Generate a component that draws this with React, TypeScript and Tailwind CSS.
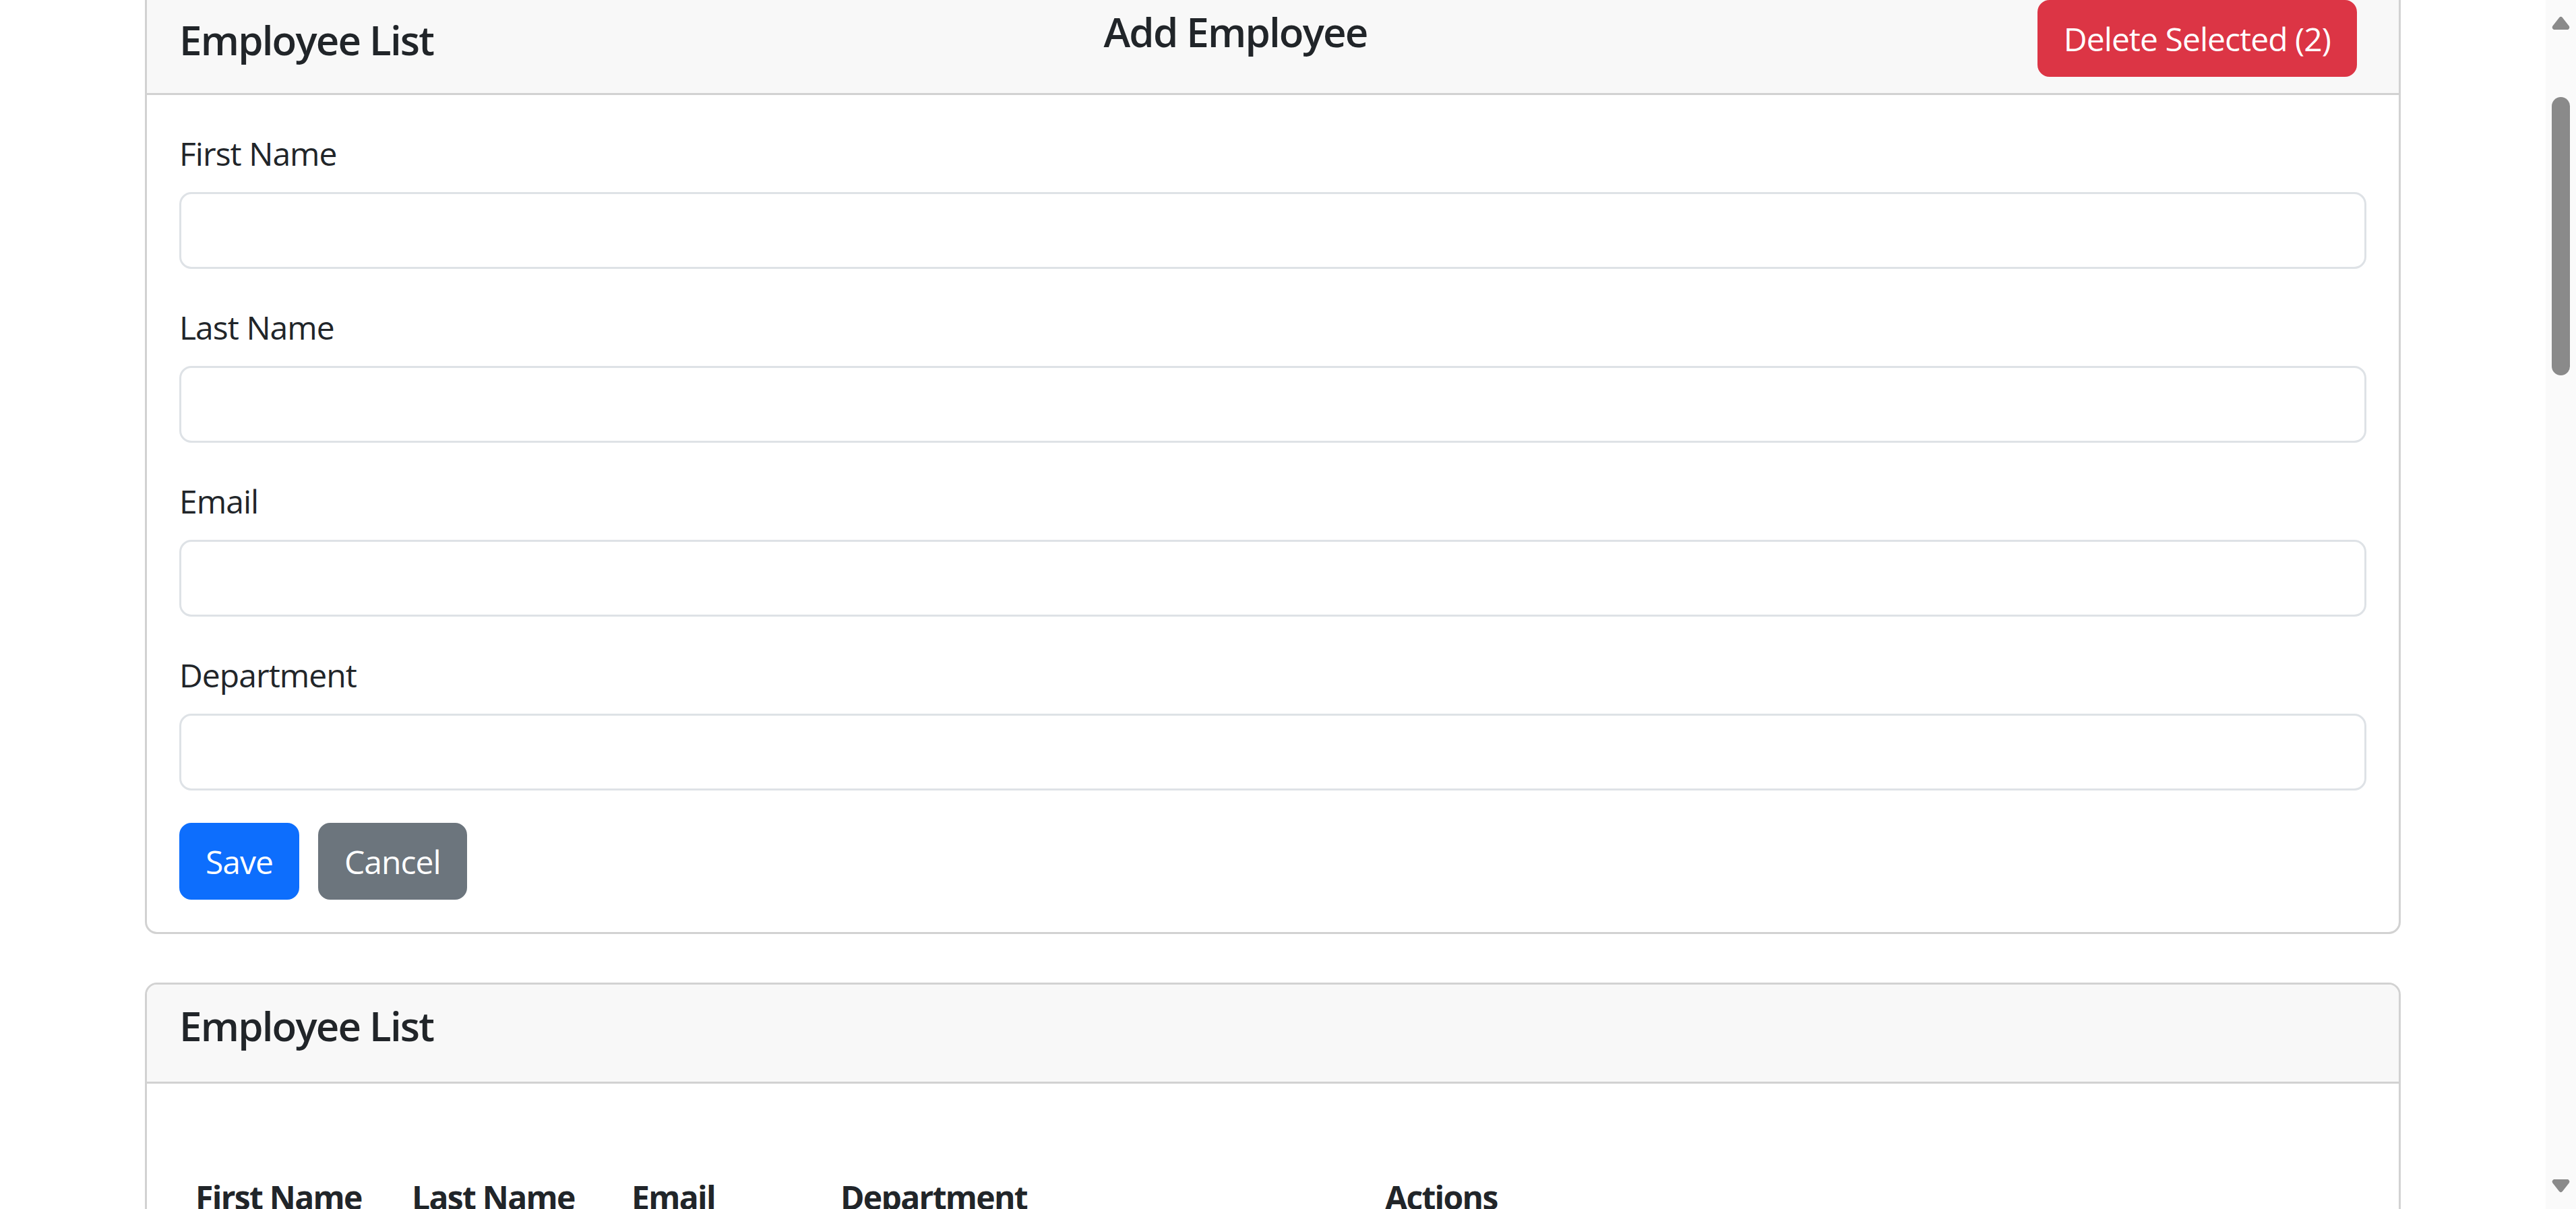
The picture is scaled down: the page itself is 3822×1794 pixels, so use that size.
import React from "react";

const font = { fontFamily: '"Open Sans", "Noto Sans", sans-serif' };

function Field({ label }: { label: string }) {
  return (
    <div className="mb-[48px]">
      <label className="block pt-[3px] mb-[21px] text-[48px] leading-[72px] tracking-[-0.02em] text-[#212529]">
        {label}
      </label>
      <input
        type="text"
        className="block w-full h-[114px] border-[3px] border-[#dee2e6] rounded-[18px] bg-white px-[36px] text-[48px] outline-none"
      />
    </div>
  );
}

function Arrow({ down }: { down?: boolean }) {
  return (
    <svg width="27" height="20" viewBox="0 0 27 20" className={down ? "rotate-180" : ""}>
      <path
        d="M11 2.2 Q13.5 -0.6 16 2.2 L25.6 14.6 Q27.6 18 24 20 L3 20 Q-0.6 18 1.4 14.6 Z"
        fill="#8a8a8a"
      />
    </svg>
  );
}

export default function App() {
  return (
    <div className="flex w-full h-[1794px] overflow-hidden bg-white text-[#212529]" style={font}>
      <main className="flex-1 min-w-0 overflow-hidden">
        <div className="ml-[215px] w-[3347px] mt-[-27px]">
          {/* Card 1 */}
          <div className="border-[3px] border-[#d2d2d2] rounded-[18px] bg-white">
            <div className="flex items-center justify-between bg-[#f8f8f8] border-b-[3px] border-[#d2d2d2] rounded-t-[15px] px-[48px] py-[24px]">
              <h5 className="pt-[3px] text-[60px] leading-[72px] font-semibold tracking-[-0.03em]">Employee List</h5>
              <h5 className="pt-[3px] text-[60px] leading-[72px] font-semibold tracking-[-0.03em] mb-[24px]">Add Employee</h5>
              <button className="mr-[14px] h-[114px] px-[36px] pt-[2px] bg-[#dc3545] border-[3px] border-[#dc3545] rounded-[18px] text-white text-[48px] leading-[72px] tracking-[-0.02em]">
                Delete Selected (2)
              </button>
            </div>
            <div className="p-[48px]">
              <Field label="First Name" />
              <Field label="Last Name" />
              <Field label="Email" />
              <Field label="Department" />
              <div className="flex gap-[28px]">
                <button className="h-[114px] px-[36px] pt-[2px] bg-[#0d6efd] border-[3px] border-[#0d6efd] rounded-[18px] text-white text-[48px] leading-[72px] tracking-[-0.02em]">
                  Save
                </button>
                <button className="h-[114px] px-[36px] pt-[2px] bg-[#6c757d] border-[3px] border-[#6c757d] rounded-[18px] text-white text-[48px] leading-[72px] tracking-[-0.02em]">
                  Cancel
                </button>
              </div>
            </div>
          </div>

          {/* Card 2 */}
          <div className="mt-[72px] border-[3px] border-[#d2d2d2] rounded-[18px] bg-white">
            <div className="bg-[#f8f8f8] border-b-[3px] border-[#d2d2d2] rounded-t-[15px] px-[48px] py-[24px]">
              <h5 className="pt-[3px] text-[60px] leading-[69px] font-semibold tracking-[-0.03em] mb-[24px]">Employee List</h5>
            </div>
            <div className="px-[48px] pt-[106px] pb-[48px]">
              <table className="w-full table-fixed border-collapse">
                <colgroup>
                  <col className="w-[321px]" />
                  <col className="w-[326px]" />
                  <col className="w-[310px]" />
                  <col className="w-[808px]" />
                  <col />
                </colgroup>
                <thead>
                  <tr className="border-b-[3px] border-[#212529]">
                    {["First Name", "Last Name", "Email", "Department", "Actions"].map((h) => (
                      <th
                        key={h}
                        className="text-left font-bold px-[24px] pt-[27px] pb-[21px] text-[48px] leading-[72px] tracking-[-0.035em]"
                      >
                        {h}
                      </th>
                    ))}
                  </tr>
                </thead>
                <tbody>
                  <tr>
                    <td className="px-[24px] py-[24px] text-[48px] leading-[72px]">&nbsp;</td>
                  </tr>
                </tbody>
              </table>
            </div>
          </div>
        </div>
      </main>

      {/* Scrollbar */}
      <div className="w-[45px] h-full bg-[#fafafa] flex flex-col items-center pt-[24px] pb-[24px]">
        <Arrow />
        <div className="mt-[100px] w-[27px] h-[413px] rounded-full bg-[#8a8a8a]" />
        <div className="flex-1" />
        <Arrow down />
      </div>
    </div>
  );
}
